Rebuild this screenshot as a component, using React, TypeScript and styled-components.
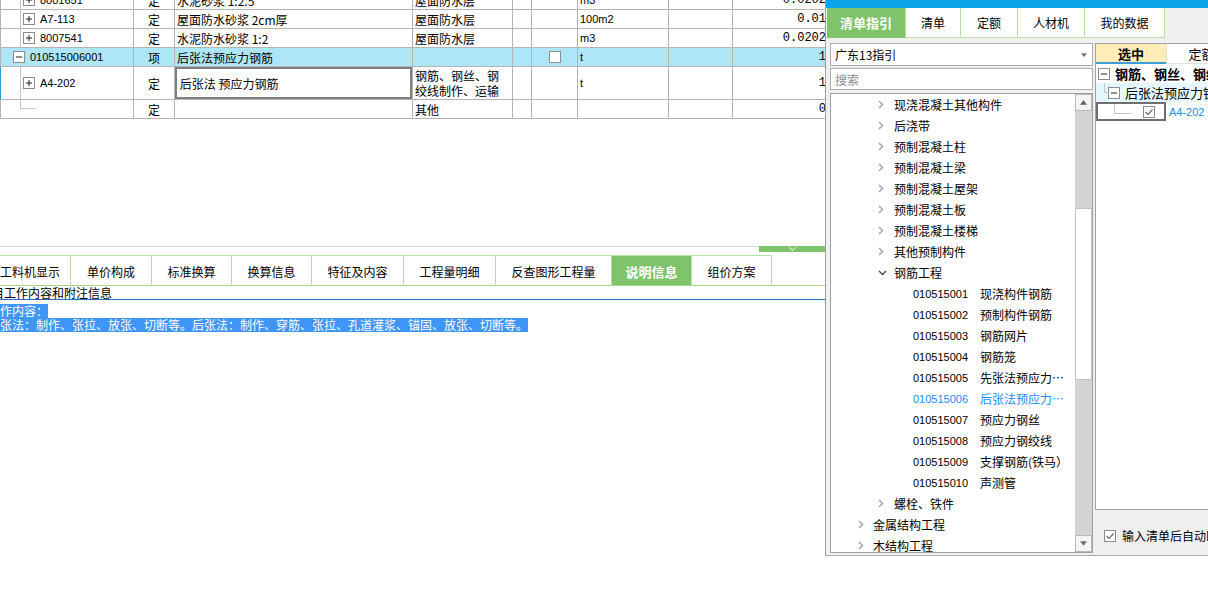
import React from 'react';
import styled, { createGlobalStyle } from 'styled-components';

const GlobalStyle = createGlobalStyle`
  html, body {
    margin: 0;
    padding: 0;
    background: #fff;
    overflow: hidden;
  }
  body {
    font-family: "Noto Sans CJK SC", "Liberation Sans", sans-serif;
    font-size: 12px;
    color: #000;
  }
  * { box-sizing: border-box; }
`;

const GREEN = '#7fc46b';
const TAB_LINE = '#b7e2a4';
const GRID = '#b4b4b4';
const GUIDE = '#c6c6c6';

const Page = styled.div`
  display: flex;
  align-items: flex-start;
  width: 1208px;
  height: 597px;
`;

/* ---------- left: estimate grid + detail tabs ---------- */

const Main = styled.div`
  width: 825px;
  height: 597px;
  flex-shrink: 0;
  overflow: hidden;
  display: flex;
  flex-direction: column;
`;

const TableArea = styled.div`
  height: 246px;
  flex-shrink: 0;
  overflow: hidden;
`;

const Table = styled.div`
  margin-top: -9px;
  width: 830px;
`;

const Row = styled.div<{ $h?: number; $sel?: boolean; $focus?: boolean }>`
  display: flex;
  height: ${p => p.$h ?? 19}px;
  background: ${p => (p.$sel ? '#afe6f7' : '#fff')};
  border-bottom: 1px solid ${GRID};
  border-left: 1px solid ${p => (p.$focus ? '#2b9bd8' : GRID)};
`;

const Cell = styled.div<{ $w: number; $align?: string; $edit?: boolean }>`
  width: ${p => p.$w}px;
  flex-shrink: 0;
  display: flex;
  align-items: center;
  justify-content: ${p => p.$align ?? 'flex-start'};
  padding: 0 ${p => (p.$align === 'flex-end' ? '3px' : '2px')};
  border-right: 1px solid ${GRID};
  line-height: 15px;
  white-space: nowrap;
  overflow: hidden;
  box-shadow: ${p => (p.$edit ? 'inset 0 0 0 2px #7f7f7f' : 'none')};
`;

const CodeCell = styled(Cell)<{ $pad?: number }>`
  padding: 0 0 0 ${p => p.$pad ?? 0}px;
`;

const Guide = styled.span`
  align-self: stretch;
  width: 20px;
  flex-shrink: 0;
  border-right: 1px solid ${GUIDE};
`;

const Spacer = styled.span<{ $w: number }>`
  width: ${p => p.$w}px;
  flex-shrink: 0;
`;

const Elbow = styled.span`
  align-self: flex-start;
  width: 16px;
  height: 9px;
  border-left: 1px solid ${GUIDE};
  border-bottom: 1px solid ${GUIDE};
`;

const Code = styled.span<{ $gap?: number }>`
  margin-left: ${p => p.$gap ?? 5}px;
  font-family: "Liberation Sans", sans-serif;
  font-size: 11px;
`;

const Num = styled.span`
  font-family: "Liberation Mono", monospace;
  font-size: 12px;
`;

const Unit = styled.span`
  font-family: "Liberation Sans", sans-serif;
  font-size: 11px;
`;

const Check = styled.span`
  width: 12px;
  height: 12px;
  background: #fff;
  border: 1px solid #8f8f8f;
`;

const BoxSvg = styled.svg`
  flex-shrink: 0;
  display: block;
`;

const TreeBox = ({ open, gap = 2 }: { open?: boolean; gap?: number }) => (
  <BoxSvg width="12" height="12" viewBox="0 0 12 12" style={{ marginLeft: gap }}>
    <rect x="0.5" y="0.5" width="11" height="11" fill="#fff" stroke="#8c8c8c" />
    <line x1="3" y1="6" x2="9" y2="6" stroke="#1e1e1e" />
    {!open && <line x1="6" y1="3" x2="6" y2="9" stroke="#1e1e1e" />}
  </BoxSvg>
);

const COLS = [133, 41, 238, 100, 19, 46, 91, 64, 97];

type Line = {
  code?: string;
  kind: string;
  name: string;
  feature: React.ReactNode;
  unit: string;
  qty: string;
};

const lines: Line[] = [
  { code: '8001651', kind: '定', name: '水泥砂浆 1:2.5', feature: '屋面防水层', unit: 'm3', qty: '0.0202' },
  { code: 'A7-113', kind: '定', name: '屋面防水砂浆 2cm厚', feature: '屋面防水层', unit: '100m2', qty: '0.01' },
  { code: '8007541', kind: '定', name: '水泥防水砂浆 1:2', feature: '屋面防水层', unit: 'm3', qty: '0.0202' },
];

const DataRow = ({ l }: { l: Line }) => (
  <Row>
    <CodeCell $w={COLS[0]}>
      <Guide />
      <TreeBox />
      <Code>{l.code}</Code>
    </CodeCell>
    <Cell $w={COLS[1]} $align="center">{l.kind}</Cell>
    <Cell $w={COLS[2]}>{l.name}</Cell>
    <Cell $w={COLS[3]}>{l.feature}</Cell>
    <Cell $w={COLS[4]} />
    <Cell $w={COLS[5]} />
    <Cell $w={COLS[6]}><Unit>{l.unit}</Unit></Cell>
    <Cell $w={COLS[7]} />
    <Cell $w={COLS[8]} $align="flex-end"><Num>{l.qty}</Num></Cell>
  </Row>
);

const Splitter = styled.div`
  height: 9px;
  flex-shrink: 0;
  display: flex;
  align-items: flex-start;
`;

const SplitLine = styled.div`
  flex: 1;
  height: 1px;
  background: #d9d9d9;
`;

const SplitHandle = styled.div`
  width: 66px;
  height: 6px;
  background: ${GREEN};
  display: flex;
  justify-content: center;
`;

const TabStrip = styled.div`
  height: 31px;
  flex-shrink: 0;
  margin-left: -10px;
  display: flex;
  border-bottom: 1px solid #a8d892;
`;

const BottomTab = styled.div<{ $w: number; $active?: boolean }>`
  width: ${p => p.$w}px;
  flex-shrink: 0;
  display: flex;
  align-items: center;
  justify-content: center;
  padding-top: 2px;
  border-top: 1px solid ${TAB_LINE};
  border-right: 1px solid ${TAB_LINE};
  background: ${p => (p.$active ? GREEN : '#fff')};
  color: ${p => (p.$active ? '#fff' : '#000')};
  font-weight: ${p => (p.$active ? 700 : 400)};
  font-size: ${p => (p.$active ? 13 : 12)}px;
`;

const InfoTitle = styled.div`
  height: 14px;
  flex-shrink: 0;
  border-bottom: 1px solid #1f71c9;
  line-height: 13px;
  white-space: nowrap;
  & > span { margin-left: -20px; }
`;

const InfoBody = styled.div`
  padding-top: 4px;
  margin-left: -12px;
`;

const Selected = styled.div`
  width: fit-content;
  height: 14px;
  line-height: 14px;
  background: #3f96f7;
  color: #fff;
  white-space: nowrap;
`;

const bottomTabs: [string, number][] = [
  ['工料机显示', 81],
  ['单价构成', 81],
  ['标准换算', 80],
  ['换算信息', 80],
  ['特征及内容', 92],
  ['工程量明细', 92],
  ['反查图形工程量', 116],
  ['说明信息', 80],
  ['组价方案', 80],
];

/* ---------- right: guide panel ---------- */

const Panel = styled.div`
  width: 383px;
  height: 556px;
  flex-shrink: 0;
  overflow: hidden;
  display: flex;
  flex-direction: column;
  background: #f0f0f0;
  border-left: 1px solid #9f9f9f;
  border-bottom: 1px solid #a9a9a9;
`;

const TopBar = styled.div`
  height: 8px;
  flex-shrink: 0;
  background: #08a3e8;
`;

const PanelTabs = styled.div`
  height: 30px;
  flex-shrink: 0;
  display: flex;
  padding-left: 1px;
`;

const PanelTab = styled.div<{ $w: number; $active?: boolean }>`
  width: ${p => p.$w}px;
  flex-shrink: 0;
  display: flex;
  align-items: center;
  justify-content: center;
  background: ${p => (p.$active ? GREEN : '#fff')};
  color: ${p => (p.$active ? '#fff' : '#000')};
  font-weight: ${p => (p.$active ? 700 : 400)};
  font-size: ${p => (p.$active ? 13 : 12)}px;
  border-right: 1px solid ${TAB_LINE};
  border-bottom: 1px solid ${p => (p.$active ? GREEN : TAB_LINE)};
`;

const PanelBody = styled.div`
  flex: 1;
  min-height: 0;
  display: flex;
  gap: 2px;
  padding: 5px 0 2px 4px;
`;

const LeftCol = styled.div`
  width: 263px;
  flex-shrink: 0;
  display: flex;
  flex-direction: column;
`;

const Field = styled.div<{ $h: number; $mt?: number; $muted?: boolean }>`
  height: ${p => p.$h}px;
  margin-top: ${p => p.$mt ?? 0}px;
  flex-shrink: 0;
  display: flex;
  align-items: center;
  justify-content: space-between;
  padding: 0 5px 0 4px;
  background: #fff;
  border: 1px solid #abadb3;
  color: ${p => (p.$muted ? '#8e8e8e' : '#000')};
`;

const TreeFrame = styled.div`
  flex: 1;
  min-height: 0;
  margin-top: 3px;
  display: flex;
  background: #fff;
  border: 1px solid #a0a0a0;
`;

const TreeList = styled.div`
  flex: 1;
  overflow: hidden;
`;

const TreeRow = styled.div<{ $indent: number; $active?: boolean }>`
  height: 21px;
  display: flex;
  align-items: center;
  padding-left: ${p => p.$indent}px;
  white-space: nowrap;
  color: ${p => (p.$active ? '#1a8cff' : '#000')};
`;

const Twisty = styled.span<{ $w: number }>`
  width: ${p => p.$w}px;
  flex-shrink: 0;
  display: flex;
  align-items: center;
`;

const LeafCode = styled.span`
  width: 67px;
  flex-shrink: 0;
  font-family: "Liberation Sans", sans-serif;
  font-size: 11px;
`;

const LeafName = styled.span`
  max-width: 90px;
  overflow: hidden;
  text-overflow: ellipsis;
`;

const ScrollBar = styled.div`
  width: 17px;
  flex-shrink: 0;
  display: flex;
  flex-direction: column;
  background: #d4d4d4;
`;

const ScrollBtn = styled.div`
  height: 17px;
  flex-shrink: 0;
  display: flex;
  align-items: center;
  justify-content: center;
  background: #f4f4f4;
  border: 1px solid #b9b9b9;
`;

const ScrollGap = styled.div<{ $h?: number }>`
  height: ${p => (p.$h ? `${p.$h}px` : 'auto')};
  flex: ${p => (p.$h ? '0 0 auto' : '1')};
`;

const Thumb = styled.div`
  height: 172px;
  flex-shrink: 0;
  background: #fff;
  border: 1px solid #c2c2c2;
`;

const RightCol = styled.div`
  width: 180px;
  flex-shrink: 0;
  display: flex;
  flex-direction: column;
`;

const RightBox = styled.div`
  height: 467px;
  flex-shrink: 0;
  background: #fff;
  border: 1px solid #a0a0a0;
`;

const GridHead = styled.div`
  height: 20px;
  display: flex;
`;

const HeadCell = styled.div<{ $active?: boolean }>`
  width: 70px;
  flex-shrink: 0;
  display: flex;
  align-items: center;
  justify-content: center;
  font-weight: ${p => (p.$active ? 700 : 400)};
  font-size: 13px;
  background: ${p => (p.$active ? '#ffedb8' : '#fff')};
  border-bottom: ${p => (p.$active ? '2px solid #3d9bd6' : '1px solid #e2e2e2')};
  border-left: ${p => (p.$active ? 'none' : '1px solid #e2e2e2')};
`;

const PickRow = styled.div<{ $bg?: string }>`
  height: 19px;
  display: flex;
  align-items: center;
  background: ${p => p.$bg ?? '#fff'};
  white-space: nowrap;
  font-size: 13px;
`;

const PickGuide = styled.span<{ $ml: number; $w: number }>`
  align-self: flex-start;
  margin-left: ${p => p.$ml}px;
  width: ${p => p.$w}px;
  height: 10px;
  flex-shrink: 0;
  border-left: 1px solid ${GUIDE};
  border-bottom: 1px solid ${GUIDE};
`;

const PickCell = styled.div`
  width: 70px;
  height: 19px;
  flex-shrink: 0;
  display: flex;
  align-items: center;
  border: 2px solid #6e6e6e;
`;

const PickCode = styled.span`
  margin-left: 3px;
  font-family: "Liberation Sans", sans-serif;
  font-size: 11px;
  color: #1890e8;
`;

const Bold = styled.span<{ $ml: number }>`
  margin-left: ${p => p.$ml}px;
  font-weight: 700;
`;

const Plain = styled.span<{ $ml: number }>`
  margin-left: ${p => p.$ml}px;
`;

const AutoRow = styled.div`
  margin-top: 17px;
  padding-left: 9px;
  display: flex;
  align-items: center;
  gap: 6px;
  white-space: nowrap;
`;

const Tick = ({ ml = 0 }: { ml?: number }) => (
  <BoxSvg width="12" height="12" viewBox="0 0 12 12" style={{ marginLeft: ml }}>
    <rect x="0.5" y="0.5" width="11" height="11" fill="#fff" stroke="#8b8b8b" />
    <polyline points="2.5,6 5,8.5 9.5,3.5" fill="none" stroke="#6a6a6a" strokeWidth="1.2" />
  </BoxSvg>
);

const Chevron = ({ open }: { open?: boolean }) =>
  open ? (
    <svg width="9" height="6" viewBox="0 0 9 6">
      <polyline points="1,1 4.5,4.5 8,1" fill="none" stroke="#4a4a4a" strokeWidth="1.4" />
    </svg>
  ) : (
    <svg width="6" height="9" viewBox="0 0 6 9">
      <polyline points="1,1 4.5,4.5 1,8" fill="none" stroke="#a8a8a8" strokeWidth="1.5" />
    </svg>
  );

const Tri = ({ up, size = 7 }: { up?: boolean; size?: number }) => (
  <svg width={size} height={Math.ceil(size / 2) + 1} viewBox="0 0 8 5">
    <polygon points={up ? '0,5 4,0 8,5' : '0,0 8,0 4,5'} fill={up ? '#5f5f5f' : '#707070'} />
  </svg>
);

type Node = { level: 1 | 2 | 3; label: string; code?: string; open?: boolean; active?: boolean };

const nodes: Node[] = [
  { level: 2, label: '现浇混凝土其他构件' },
  { level: 2, label: '后浇带' },
  { level: 2, label: '预制混凝土柱' },
  { level: 2, label: '预制混凝土梁' },
  { level: 2, label: '预制混凝土屋架' },
  { level: 2, label: '预制混凝土板' },
  { level: 2, label: '预制混凝土楼梯' },
  { level: 2, label: '其他预制构件' },
  { level: 2, label: '钢筋工程', open: true },
  { level: 3, code: '010515001', label: '现浇构件钢筋' },
  { level: 3, code: '010515002', label: '预制构件钢筋' },
  { level: 3, code: '010515003', label: '钢筋网片' },
  { level: 3, code: '010515004', label: '钢筋笼' },
  { level: 3, code: '010515005', label: '先张法预应力钢筋' },
  { level: 3, code: '010515006', label: '后张法预应力钢筋', active: true },
  { level: 3, code: '010515007', label: '预应力钢丝' },
  { level: 3, code: '010515008', label: '预应力钢绞线' },
  { level: 3, code: '010515009', label: '支撑钢筋(铁马）' },
  { level: 3, code: '010515010', label: '声测管' },
  { level: 2, label: '螺栓、铁件' },
  { level: 1, label: '金属结构工程' },
  { level: 1, label: '木结构工程' },
];

const GuideNode = ({ n }: { n: Node }) => {
  if (n.level === 3) {
    return (
      <TreeRow $indent={82} $active={n.active}>
        <LeafCode>{n.code}</LeafCode>
        <LeafName>{n.label}</LeafName>
      </TreeRow>
    );
  }
  return (
    <TreeRow $indent={n.level === 2 ? 47 : 27}>
      <Twisty $w={n.level === 2 ? 16 : 15}>
        <Chevron open={n.open} />
      </Twisty>
      {n.label}
    </TreeRow>
  );
};

const App: React.FC = () => {
  return (
    <>
      <GlobalStyle />
      <Page>
        <Main>
          <TableArea>
            <Table>
              {lines.map(l => (
                <DataRow key={l.code} l={l} />
              ))}
              <Row $sel>
                <CodeCell $w={COLS[0]} $pad={12}>
                  <TreeBox open gap={0} />
                  <Code>010515006001</Code>
                </CodeCell>
                <Cell $w={COLS[1]} $align="center">项</Cell>
                <Cell $w={COLS[2]}>后张法预应力钢筋</Cell>
                <Cell $w={COLS[3]} />
                <Cell $w={COLS[4]} />
                <Cell $w={COLS[5]} $align="center"><Check /></Cell>
                <Cell $w={COLS[6]}><Unit>t</Unit></Cell>
                <Cell $w={COLS[7]} />
                <Cell $w={COLS[8]} $align="flex-end"><Num>1</Num></Cell>
              </Row>
              <Row $h={33} $focus>
                <CodeCell $w={COLS[0]}>
                  <Guide />
                  <TreeBox />
                  <Code>A4-202</Code>
                </CodeCell>
                <Cell $w={COLS[1]} $align="center">定</Cell>
                <Cell $w={COLS[2]} $edit>&nbsp;后张法 预应力钢筋</Cell>
                <Cell $w={COLS[3]}>
                  钢筋、钢丝、钢
                  <br />
                  绞线制作、运输
                </Cell>
                <Cell $w={COLS[4]} />
                <Cell $w={COLS[5]} />
                <Cell $w={COLS[6]}><Unit>t</Unit></Cell>
                <Cell $w={COLS[7]} />
                <Cell $w={COLS[8]} $align="flex-end"><Num>1</Num></Cell>
              </Row>
              <Row>
                <CodeCell $w={COLS[0]}>
                  <Spacer $w={19} />
                  <Elbow />
                </CodeCell>
                <Cell $w={COLS[1]} $align="center">定</Cell>
                <Cell $w={COLS[2]} />
                <Cell $w={COLS[3]}>其他</Cell>
                <Cell $w={COLS[4]} />
                <Cell $w={COLS[5]} />
                <Cell $w={COLS[6]} />
                <Cell $w={COLS[7]} />
                <Cell $w={COLS[8]} $align="flex-end"><Num>0</Num></Cell>
              </Row>
            </Table>
          </TableArea>

          <Splitter>
            <SplitLine />
            <SplitHandle>
              <svg width="9" height="6" viewBox="0 0 9 6">
                <polyline points="1,1 4.5,4.5 8,1" fill="none" stroke="#cfeac4" strokeWidth="1.2" />
              </svg>
            </SplitHandle>
          </Splitter>

          <TabStrip>
            {bottomTabs.map(([t, w]) => (
              <BottomTab key={t} $w={w} $active={t === '说明信息'}>
                {t}
              </BottomTab>
            ))}
          </TabStrip>

          <InfoTitle>
            <span>项目工作内容和附注信息</span>
          </InfoTitle>
          <InfoBody>
            <Selected>工作内容：</Selected>
            <Selected>
              先张法：制作、张拉、放张、切断等。后张法：制作、穿筋、张拉、孔道灌浆、锚固、放张、切断等。
            </Selected>
          </InfoBody>
        </Main>

        <Panel>
          <TopBar />
          <PanelTabs>
            <PanelTab $w={79} $active>清单指引</PanelTab>
            <PanelTab $w={55}>清单</PanelTab>
            <PanelTab $w={57}>定额</PanelTab>
            <PanelTab $w={67}>人材机</PanelTab>
            <PanelTab $w={80}>我的数据</PanelTab>
          </PanelTabs>

          <PanelBody>
            <LeftCol>
              <Field $h={23}>
                <span>广东13指引</span>
                <Tri size={6} />
              </Field>
              <Field $h={22} $mt={2} $muted>
                <span>搜索</span>
              </Field>
              <TreeFrame>
                <TreeList>
                  {nodes.map(n => (
                    <GuideNode key={n.label} n={n} />
                  ))}
                </TreeList>
                <ScrollBar>
                  <ScrollBtn>
                    <Tri up />
                  </ScrollBtn>
                  <ScrollGap $h={97} />
                  <Thumb />
                  <ScrollGap />
                  <ScrollBtn>
                    <Tri />
                  </ScrollBtn>
                </ScrollBar>
              </TreeFrame>
            </LeftCol>

            <RightCol>
              <RightBox>
                <GridHead>
                  <HeadCell $active>选中</HeadCell>
                  <HeadCell>定额</HeadCell>
                </GridHead>
                <PickRow>
                  <TreeBox open gap={2} />
                  <Bold $ml={5}>钢筋、钢丝、钢绞线制作、运输</Bold>
                </PickRow>
                <PickRow $bg="#e5f6fd">
                  <PickGuide $ml={8} $w={4} />
                  <TreeBox open gap={0} />
                  <Plain $ml={5}>后张法预应力钢筋</Plain>
                </PickRow>
                <PickRow>
                  <PickCell>
                    <PickGuide $ml={16} $w={18} />
                    <Tick ml={11} />
                  </PickCell>
                  <PickCode>A4-202</PickCode>
                </PickRow>
              </RightBox>
              <AutoRow>
                <Tick />
                <span>输入清单后自动匹配定额</span>
              </AutoRow>
            </RightCol>
          </PanelBody>
        </Panel>
      </Page>
    </>
  );
};

export default App;
